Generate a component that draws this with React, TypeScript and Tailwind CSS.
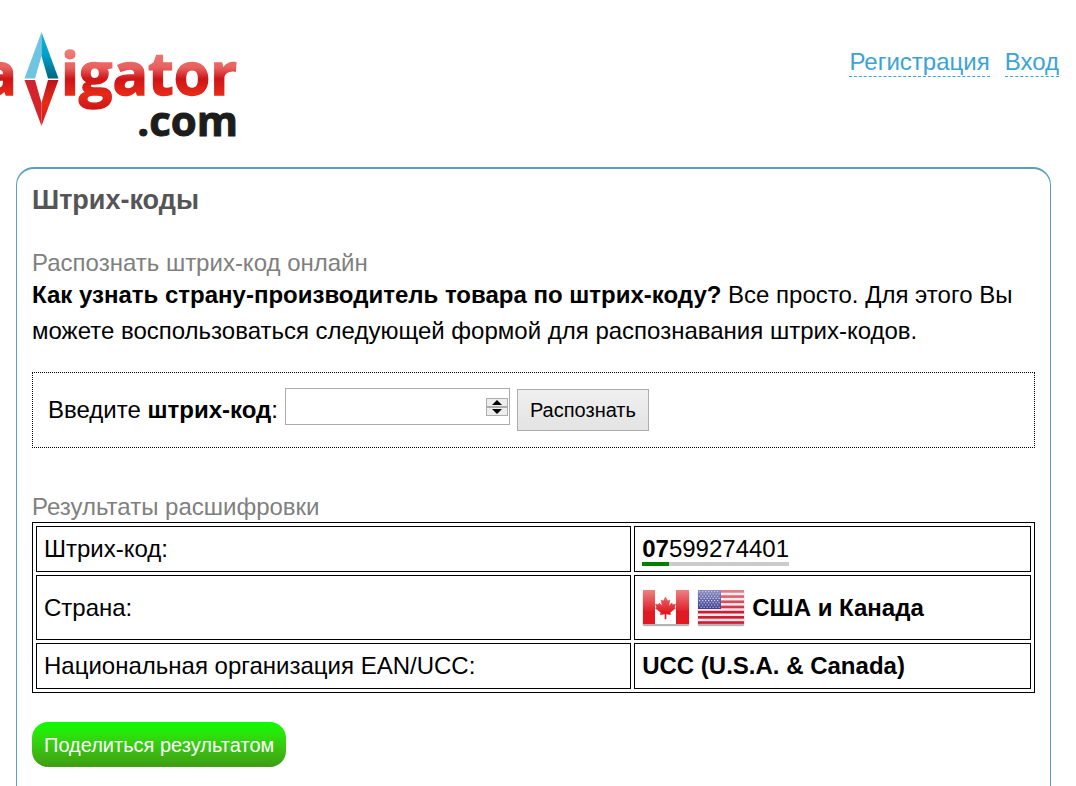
import type { ReactNode } from "react";

const rows: { label: string; value: ReactNode; height: string }[] = [
  { label: "Штрих-код:", value: <Barcode prefix="07" rest="599274401" />, height: "h-[46px]" },
  { label: "Страна:", value: <Country name="США и Канада" />, height: "h-[65px]" },
  {
    label: "Национальная организация EAN/UCC:",
    value: <b>UCC (U.S.A. &amp; Canada)</b>,
    height: "h-[46px]",
  },
];

function Logo() {
  return (
    <svg
      width="240"
      height="140"
      viewBox="0 0 240 140"
      role="img"
      aria-label="navigator.com"
      className="shrink-0 font-['Open_Sans',sans-serif] font-bold"
    >
      <defs>
        <linearGradient id="letters" gradientUnits="userSpaceOnUse" x1="0" y1="48" x2="0" y2="110">
          <stop offset="0" stopColor="#f0807c" />
          <stop offset="0.32" stopColor="#e8605e" />
          <stop offset="0.5" stopColor="#cf1417" />
          <stop offset="0.75" stopColor="#e62a18" />
          <stop offset="1" stopColor="#cc1517" />
        </linearGradient>
        <linearGradient id="north" x1="0" y1="0" x2="0" y2="1">
          <stop offset="0" stopColor="#1fb0d6" />
          <stop offset="0.5" stopColor="#00a0c8" />
          <stop offset="1" stopColor="#006680" />
        </linearGradient>
        <linearGradient id="south" x1="0" y1="0" x2="0" y2="1">
          <stop offset="0" stopColor="#bf1218" />
          <stop offset="0.5" stopColor="#e42c1a" />
          <stop offset="1" stopColor="#d8181c" />
        </linearGradient>
      </defs>
      <g fontSize="59" textAnchor="end" fill="url(#letters)" stroke="url(#letters)" strokeWidth="1.5">
        <text x="17" y="95">
          a
        </text>
        <text x="237" y="95">
          igator
        </text>
      </g>
      <path d="M41.5 32 24.5 78.5H35L41.5 56Z" fill="#6ec5e1" />
      <path d="M41.5 32 58.5 78.5H48L41.5 56Z" fill="url(#north)" />
      <path d="M24.5 80H35L41.5 103V126Z" fill="#d5232b" />
      <path d="M58.5 80H48L41.5 103V126Z" fill="url(#south)" />
      <text
        x="238"
        y="136"
        textAnchor="end"
        fontSize="42"
        fill="#1d1d1b"
        stroke="#1d1d1b"
        strokeWidth="1"
      >
        .com
      </text>
    </svg>
  );
}

function Barcode({ prefix, rest }: { prefix: string; rest: string }) {
  return (
    <>
      <b className="border-b-4 border-[#008000]">{prefix}</b>
      <span className="border-b-4 border-[#cccccc]">{rest}</span>
    </>
  );
}

function Flag({ title, children }: { title: string; children: ReactNode }) {
  return (
    <svg width="48" height="38" viewBox="0 0 48 38" role="img" aria-label={title}>
      <rect x="0.5" y="2" width="47" height="35.5" rx="2" fill="#000" opacity="0.12" />
      <rect x="1" y="2" width="46" height="35" rx="1" fill="#000" opacity="0.2" />
      {children}
      <rect x="1" y="1" width="46" height="21" fill="url(#gloss)" />
    </svg>
  );
}

function Country({ name }: { name: string }) {
  return (
    <div className="flex items-center gap-[7px]">
      <Flag title="Канада">
        <defs>
          <linearGradient id="gloss" x1="0" y1="0" x2="0" y2="1">
            <stop offset="0" stopColor="#fff" stopOpacity="0.45" />
            <stop offset="1" stopColor="#fff" stopOpacity="0.03" />
          </linearGradient>
        </defs>
        <rect x="1" y="1" width="46" height="34" fill="#e01a22" />
        <rect x="13" y="1" width="21" height="34" fill="#fff" />
        <path
          d="M23.5 8l-2 4-2.300-1 1 6-3-3-.8 1.700-2.900-.5 1.100 3.100-1.100.9 5.500 4.300-.6 2 4.600-.6v5h1v-5l4.600.6-.6-2 5.500-4.300-1.100-.9 1.100-3.100-2.900.5-.8-1.700-3 3 1-6-2.300 1z"
          fill="#e01a22"
          stroke="#e01a22"
          strokeWidth="0.6"
        />
      </Flag>
      <Flag title="США">
        <rect x="1" y="1" width="46" height="34" fill="#fbe9ea" />
        {[0, 1, 2, 3, 4, 5, 6].map((n) => (
          <rect key={n} x="1" y={1 + n * 5.2} width="46" height="2.7" fill="#d01c35" />
        ))}
        <rect x="1" y="1" width="23" height="19" fill="#30308a" />
        {[0, 1, 2, 3, 4, 5, 6, 7].map((row) => (
          <line
            key={row}
            x1={row % 2 ? 3.5 : 2}
            x2="23"
            y1={2.8 + row * 2.2}
            y2={2.8 + row * 2.2}
            stroke="#c5c5e4"
            strokeWidth="1.1"
            strokeDasharray="1.3 1.7"
          />
        ))}
      </Flag>
      <b>{name}</b>
    </div>
  );
}

function SpinButton({ label, path }: { label: string; path: string }) {
  return (
    <button
      type="button"
      aria-label={label}
      className="flex h-[9px] w-[22px] items-center justify-center border border-[#adadad] bg-[#eeeeee]"
    >
      <svg width="10" height="5" viewBox="0 0 10 5">
        <path d={path} fill="#000" />
      </svg>
    </button>
  );
}

function BarcodeForm() {
  return (
    <form
      className="mt-[23px] border border-dotted border-black p-[15px]"
      onSubmit={(e) => e.preventDefault()}
    >
      <div className="flex h-11 items-center gap-[7px]">
        <label htmlFor="barcode">
          Введите <b>штрих-код</b>:
        </label>
        <div className="relative self-start">
          <input
            id="barcode"
            type="text"
            inputMode="numeric"
            className="block h-[37px] w-[225px] border border-[#ababab] bg-white pr-7 pl-1 outline-none"
          />
          <div className="absolute inset-y-0 right-0.5 flex flex-col justify-center">
            <SpinButton label="Больше" path="M0 5 5 0l5 5z" />
            <SpinButton label="Меньше" path="M0 0h10L5 5z" />
          </div>
        </div>
        <button
          type="submit"
          className="h-[42px] border border-[#adadad] bg-linear-to-b from-[#f0f0f0] to-[#e3e3e3] px-3 text-[20px]"
        >
          Распознать
        </button>
      </div>
    </form>
  );
}

export default function App() {
  return (
    <div className="flex min-h-screen flex-col bg-white font-['Liberation_Sans',Arial,sans-serif] text-[24px] leading-7 text-black">
      <header className="mb-[27px] flex items-start justify-between">
        <Logo />
        <nav className="flex gap-[15px] pt-12 pr-[17px] text-[#3ba4d4]">
          <a href="#register" className="border-b border-dashed border-[#3ba4d4]">
            Регистрация
          </a>
          <a href="#login" className="border-b border-dashed border-[#3ba4d4]">
            Вход
          </a>
        </nav>
      </header>

      <main className="mr-[25px] ml-4 flex-1 rounded-t-[18px] border border-t-2 border-b-0 border-[#5a9fc0] px-[15px] pt-[15px]">
        <h1 className="mb-[33px] text-[27px] leading-8 font-bold text-[#555555]">Штрих-коды</h1>

        <h2 className="text-[#808080]">Распознать штрих-код онлайн</h2>
        <p className="leading-9">
          <b>Как узнать страну-производитель товара по штрих-коду?</b> Все просто. Для этого Вы
          можете воспользоваться следующей формой для распознавания штрих-кодов.
        </p>

        <BarcodeForm />

        <table className="mt-[45px] w-full table-fixed border-separate border-spacing-[3px] border border-black">
          <caption className="pb-px text-left text-[#808080]">Результаты расшифровки</caption>
          <tbody>
            {rows.map((row) => (
              <tr key={row.label} className={row.height}>
                <th
                  scope="row"
                  className="w-[60%] border border-black px-[7px] text-left font-normal"
                >
                  {row.label}
                </th>
                <td className="border border-black px-[7px]">{row.value}</td>
              </tr>
            ))}
          </tbody>
        </table>

        <button
          type="button"
          className="mt-[29px] h-[45px] rounded-2xl bg-linear-to-b from-[#00ff00] to-[#3f9c14] px-3 text-[20px] text-white"
        >
          Поделиться результатом
        </button>
      </main>
    </div>
  );
}
